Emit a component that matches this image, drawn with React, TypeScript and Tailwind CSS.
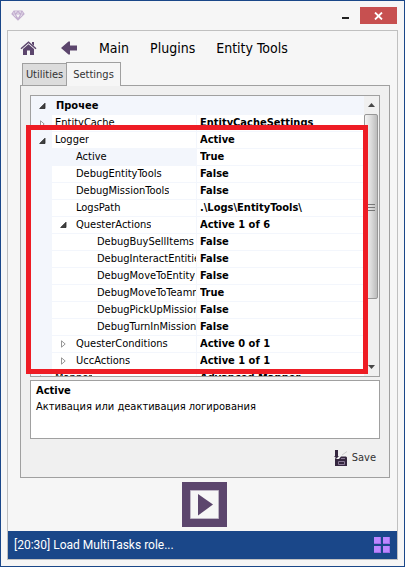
import React, { useState } from "react";

type Row = {
  name: string;
  value: string;
  level: 0 | 1 | 2;
  state?: "open" | "closed";
  selected?: boolean;
};

const rows: Row[] = [
  { name: "EntityCache", value: "EntityCacheSettings", level: 0, state: "closed" },
  { name: "Logger", value: "Active", level: 0, state: "open" },
  { name: "Active", value: "True", level: 1, selected: true },
  { name: "DebugEntityTools", value: "False", level: 1 },
  { name: "DebugMissionTools", value: "False", level: 1 },
  { name: "LogsPath", value: ".\\Logs\\EntityTools\\", level: 1 },
  { name: "QuesterActions", value: "Active 1 of 6", level: 1, state: "open" },
  { name: "DebugBuySellItems", value: "False", level: 2 },
  { name: "DebugInteractEntities", value: "False", level: 2 },
  { name: "DebugMoveToEntity", value: "False", level: 2 },
  { name: "DebugMoveToTeammate", value: "True", level: 2 },
  { name: "DebugPickUpMissionExt", value: "False", level: 2 },
  { name: "DebugTurnInMissionExt", value: "False", level: 2 },
  { name: "QuesterConditions", value: "Active 0 of 1", level: 1, state: "closed" },
  { name: "UccActions", value: "Active 1 of 1", level: 1, state: "closed" },
  { name: "Mapper", value: "Advanced Mapper", level: 0, state: "closed" },
];

const indent = { 0: "pl-[3px]", 1: "pl-[3px]", 2: "pl-[45px]" };

function Expander({ state, label }: { state: "open" | "closed"; label: string }) {
  return (
    <button
      type="button"
      aria-label={label}
      aria-expanded={state === "open"}
      className="flex h-4 w-[21px] shrink-0 items-center justify-center pl-[2px]"
    >
      <svg width="7" height="8" viewBox="0 0 7 8">
        {state === "open" ? (
          <path d="M6 1.2V6.5H.7Z" fill="#404040" stroke="#262626" strokeWidth=".8" />
        ) : (
          <path d="M1.5 .8V7.2L5.2 4Z" fill="#fff" stroke="#8b8b8b" strokeWidth=".9" />
        )}
      </svg>
    </button>
  );
}

function PropertyRow({ row }: { row: Row }) {
  return (
    <tr className="h-[17px]">
      <td className="bg-[#f3f6fc] p-0">
        {row.level === 0 && row.state && <Expander state={row.state} label={row.name} />}
      </td>
      <th
        scope="row"
        className={`border-r border-b border-[#f3f6fc] p-0 text-left font-normal ${row.selected ? "bg-[#f3f6fc]" : ""}`}
      >
        <div className="flex h-4 items-center overflow-hidden">
          {row.level === 1 &&
            (row.state ? <Expander state={row.state} label={row.name} /> : <span className="w-[21px] shrink-0" />)}
          <span className={`${indent[row.level]} min-w-0 overflow-hidden whitespace-nowrap`}>{row.name}</span>
        </div>
      </th>
      <td className="border-b border-[#f3f6fc] p-0 pl-[3px] font-bold">
        <div className="h-4 overflow-hidden whitespace-nowrap">{row.value}</div>
      </td>
    </tr>
  );
}

function ScrollBar() {
  return (
    <div className="flex w-[15px] shrink-0 flex-col bg-[#f0f0f0]">
      <button type="button" aria-label="Scroll up" className="flex h-[18px] items-center justify-center">
        <svg width="7" height="4" viewBox="0 0 7 4">
          <path d="M0 4 3.5 0 7 4Z" fill="#484848" />
        </svg>
      </button>
      <div className="flex h-[185px] w-[14px] items-center justify-center rounded-xs border border-[#979797] bg-linear-to-r from-[#f4f4f4] via-[#dcdcdc] to-[#bcbcbc]">
        <svg width="8" height="8" viewBox="0 0 8 8">
          <path d="M0 1.5H8M0 4.5H8M0 7.5H8" stroke="#777" />
        </svg>
      </div>
      <div className="flex-1" />
      <button type="button" aria-label="Scroll down" className="flex h-[18px] items-center justify-center">
        <svg width="7" height="4" viewBox="0 0 7 4">
          <path d="M0 0H7L3.5 4Z" fill="#484848" />
        </svg>
      </button>
    </div>
  );
}

export default function App() {
  const [tab, setTab] = useState("Settings");
  return (
    <div className="flex h-screen flex-col border border-[#1a4789] bg-[#f6f6f6] px-[6px] pb-[6px] font-['DejaVu_Sans_Condensed','DejaVu_Sans',sans-serif] text-[11px] leading-4 text-black">
      <header className="flex h-[29px] shrink-0 items-start justify-between pr-px pl-1">
        <svg width="14" height="11" viewBox="0 0 14 11" className="mt-[9px]" fill="none" stroke="#c3afd0" strokeWidth="1.2">
          <path d="M3 1H11L13 4 7 10 1 4ZM1 4H13M4 4 7 9 10 4M3 1 4.500 4 7 1.500 9.500 4 11 1" />
        </svg>
        <div className="flex items-start pt-[6px]">
          <button type="button" aria-label="Minimize" className="flex h-[17px] w-7 items-center justify-center pt-[5px]">
            <span className="h-[2px] w-[7px] bg-[#222]" />
          </button>
          <button type="button" aria-label="Close" className="ml-px flex h-[17px] w-[37px] items-center justify-center bg-[#c75050]">
            <svg width="9" height="8" viewBox="0 0 9 8" stroke="#fff" strokeWidth="1.8">
              <path d="M1 .5 8 7.500M8 .5 1 7.500" />
            </svg>
          </button>
        </div>
      </header>

      <div className="flex min-h-0 flex-1 flex-col border border-[#c0c0c0]">
        <nav className="flex h-[30px] shrink-0 items-center pt-1 pl-3 text-[14px]">
          <a href="#home" aria-label="Home">
            <svg width="17" height="15" viewBox="0 0 17 15">
              <path d="M12 1H14V5L12 3Z" fill="#5c466d" />
              <path d="M1 7.800 8.500 1.200 16 7.800" fill="none" stroke="#5c466d" strokeWidth="1.500" />
              <path d="M3 8 8.500 3.200 14 8V14H10V9.500H7V14H3Z" fill="#5c466d" />
            </svg>
          </a>
          <a href="#back" aria-label="Back" className="ml-6">
            <svg width="16" height="14" viewBox="0 0 16 14">
              <path d="M0 7 7.500 .5H9V4.500H16V9.500H9V13.500H7.500Z" fill="#5c466d" />
            </svg>
          </a>
          <div className="ml-[22px] flex gap-[21px]">
            <a href="#main">Main</a>
            <a href="#plugins">Plugins</a>
            <a href="#entity-tools">Entity Tools</a>
          </div>
        </nav>

        <div role="tablist" className="z-10 flex h-6 shrink-0 items-end pl-[14px] text-[#333]">
          {["Utilities", "Settings"].map((name) => (
            <button
              key={name}
              type="button"
              role="tab"
              aria-selected={tab === name}
              onClick={() => setTab(name)}
              className={
                tab === name
                  ? "-mb-px h-6 w-[55px] border border-b-0 border-[#a0a0a0] bg-[#f6f6f6]"
                  : "-mr-px h-[22px] w-[45px] border border-b-0 border-[#a0a0a0] bg-[#dcdcdc]"
              }
            >
              {name}
            </button>
          ))}
        </div>

        <section className="mr-[7px] ml-3 flex min-h-0 flex-1 flex-col border border-[#a0a0a0] bg-[#f0f0f0] px-[9px] pt-[9px]">
          <div className="relative flex min-h-0 flex-1">
            <div className="flex min-w-0 flex-1 overflow-hidden border border-[#a0a0a0] bg-white">
              <div className="min-w-0 flex-1 overflow-hidden">
                <table className="w-full table-fixed border-separate border-spacing-0">
                  <colgroup>
                    <col className="w-[21px]" />
                    <col className="w-[145px]" />
                    <col />
                  </colgroup>
                  <tbody>
                    <tr className="h-[19px] bg-[#f3f6fc]">
                      <td className="p-0">
                        <Expander state="open" label="Прочее" />
                      </td>
                      <th scope="rowgroup" colSpan={2} className="p-0 pl-1 text-left font-bold">
                        Прочее
                      </th>
                    </tr>
                    {rows.map((row) => (
                      <PropertyRow key={row.name} row={row} />
                    ))}
                  </tbody>
                </table>
              </div>
              <ScrollBar />
            </div>
            <div className="pointer-events-none absolute top-[30px] right-3 bottom-[3px] -left-1 border-5 border-[#ee1c24]" />
          </div>

          <div className="mt-[3px] h-[59px] shrink-0 border border-[#a0a0a0] bg-white px-[5px] pt-[2px]">
            <h2 className="font-bold">Active</h2>
            <p>Активация или деактивация логирования</p>
          </div>

          <div className="flex h-[38px] shrink-0 items-center justify-end pr-1">
            <button type="button" className="flex items-center gap-1 text-[#333]">
              <svg width="14" height="17" viewBox="0 0 14 17">
                <path d="M1 0H4V6H5L2.500 8.500 0 6H1Z" fill="#35273f" />
                <path d="M1 8V16H13V7.500L12 6.500H7L5 9H3Z" fill="#35273f" />
                <path d="M7 8.500H11M4.500 11.500H10.500V14.500H4.500Z" stroke="#8a7a96" fill="none" />
                <path d="M8 5 13 1.500" stroke="#ccc" />
              </svg>
              Save
            </button>
          </div>
        </section>

        <div className="flex h-[53px] shrink-0 justify-center pt-1 pl-1">
          <button type="button" aria-label="Start" className="flex h-[45px] w-[45px] items-center justify-center bg-[#5c466d]">
            <svg width="29" height="29" viewBox="0 0 29 29">
              <path d="M.5 .5H28.500V28.500H.5Z" fill="#f6f6f6" stroke="#beb5c5" />
              <path d="M8 4V25.500L23 14.500Z" fill="#5c466d" />
            </svg>
          </button>
        </div>

        <footer className="flex h-7 shrink-0 items-center justify-between bg-[#1a4789] pr-[7px] pl-[6px] font-[Roboto,sans-serif] text-[12px] text-white">
          <span>[20:30] Load MultiTasks role...</span>
          <button type="button" aria-label="Modules" className="grid grid-cols-2 gap-[2px]">
            {[0, 1, 2, 3].map((n) => (
              <span key={n} className="h-[7px] w-[7px] border-r border-b border-[#a06ce8] bg-[#bd86ff]" />
            ))}
          </button>
        </footer>
      </div>
    </div>
  );
}
